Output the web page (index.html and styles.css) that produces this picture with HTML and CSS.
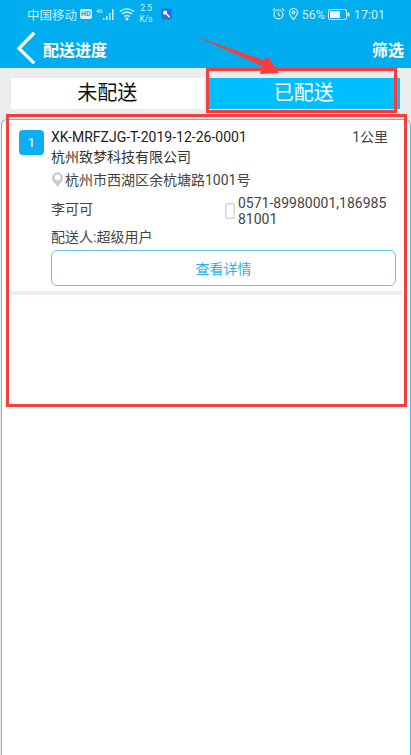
FILE: index.html
```html
<!DOCTYPE html>
<html lang="zh">
<head>
<meta charset="utf-8">
<title>配送进度</title>
<link rel="stylesheet" href="styles.css">
</head>
<body>
<div class="page">
  <header class="top">
    <div class="status">
      <div class="status-left">
        <span class="carrier">中国移动</span>
        <span class="hd">HD</span>
        <svg class="sig" width="18" height="14" viewBox="0 0 18 14"><text x="0" y="6" class="sig-t">46</text><path d="M7 13h1.500v-2H7zM10 13h1.500V9H10zM13 13h1.500V6H13zM16 13h1.500V2H16z" fill="#cfeffc"/></svg>
        <svg class="wifi" width="16" height="14" viewBox="0 0 16 14" fill="none" stroke="#e3f6fd" stroke-width="1.300"><path d="M1 4.500C5 1 11 1 15 4.500M3 7c3-2.400 7-2.400 10 0M5.200 9.500c1.700-1.200 3.900-1.200 5.600 0"/><circle cx="8" cy="12" r=".8" fill="#e3f6fd"/></svg>
        <span class="speed"><span>2.5</span><span>K/s</span></span>
        <svg class="key" width="11" height="12" viewBox="0 0 12 12"><rect width="12" height="12" rx="2.500" fill="#2a6fe0"/><circle cx="4.500" cy="4.500" r="2.300" fill="#fff"/><path d="M6 6l3.500 3.500" stroke="#fff" stroke-width="1.600"/></svg>
      </div>
      <div class="status-right">
        <svg width="13" height="14" viewBox="0 0 14 14" fill="none" stroke="#d6f2fc" stroke-width="1.300"><circle cx="7" cy="7.500" r="4.800"/><path d="M7 5v2.800l1.800 1M1 3.200L3.200 1M13 3.200L10.800 1"/></svg>
        <svg width="11" height="14" viewBox="0 0 12 14" fill="none" stroke="#d6f2fc" stroke-width="1.300"><path d="M6 13C3.500 9.800 1.600 7.800 1.600 5.400a4.400 4.400 0 0 1 8.800 0C10.400 7.800 8.500 9.800 6 13z"/><circle cx="6" cy="5.300" r="1.400"/></svg>
        <span class="pct">56%</span>
        <svg width="22" height="11" viewBox="0 0 22 11"><rect x=".5" y=".5" width="18" height="10" rx="1.500" fill="none" stroke="#d6f2fc"/><rect x="2" y="2" width="10" height="7" fill="#e8f8fe"/><rect x="19.500" y="3.500" width="2" height="4" fill="#d6f2fc"/></svg>
        <span class="clock">17:01</span>
      </div>
    </div>
    <div class="nav">
      <svg class="back" width="20" height="32" viewBox="0 0 20 32" fill="none" stroke="#f2fbff" stroke-width="3.400" stroke-linecap="square"><path d="M17 2L3 16.500 17 30"/></svg>
      <span class="title">配送进度</span>
      <span class="filter">筛选</span>
    </div>
  </header>
  <main class="body">
    <div class="tabs">
      <div class="tab">未配送</div>
      <div class="tab active">已配送</div>
    </div>
    <section class="panel">
      <article class="card">
        <div class="num">1</div>
        <div class="info">
          <div class="row-top"><span class="code">XK-MRFZJG-T-2019-12-26-0001</span><span class="dist">1公里</span></div>
          <div class="company">杭州致梦科技有限公司</div>
          <div class="addr">
            <svg width="13" height="15" viewBox="0 0 13 15"><path d="M6.500 15C3.500 11 1 8.700 1 5.800a5.500 5.500 0 0 1 11 0C12 8.700 9.500 11 6.500 15z" fill="#c9cccc"/><circle cx="6.500" cy="5.600" r="3" fill="#fff"/></svg>
            <span>杭州市西湖区余杭塘路1001号</span>
          </div>
          <div class="contact">
            <span class="name">李可可</span>
            <div class="phone">
              <svg width="10" height="16" viewBox="0 0 10 16"><rect x=".75" y=".75" width="8.500" height="14.500" rx="1.500" fill="#fff" stroke="#d5d7d7" stroke-width="1.500"/></svg>
              <span class="tel">0571-89980001,18698581001</span>
            </div>
          </div>
          <div class="courier">配送人:超级用户</div>
          <button class="detail" type="button">查看详情</button>
        </div>
      </article>
      <div class="divider"></div>
    </section>
  </main>
  <div class="mark box-tab"></div>
  <div class="mark box-card"></div>
  <svg class="arrow" width="90" height="42" viewBox="0 0 90 42"><path d="M1 1L69 25 74 22 85 38 66 39 68 31z" fill="#f73d3d"/></svg>
</div>
</body>
</html>
```
FILE: styles.css
```css
* { box-sizing: border-box; }
html, body { margin: 0; padding: 0; }
body {
  width: 411px;
  height: 755px;
  overflow: hidden;
  background: #fff;
  font-family: Roboto, "Noto Sans CJK SC", sans-serif;
}
.page { position: relative; width: 411px; height: 755px; display: flex; flex-direction: column; }
.top { height: 68px; background: #00aeef; color: #fff; flex: none; }
.status {
  height: 28px;
  padding: 0 26px 0 27px;
  display: flex;
  justify-content: space-between;
  align-items: center;
  color: #cdeefb;
  font-size: 12.500px;
}
.status-left, .status-right { display: flex; align-items: center; }
.status-right { gap: 3px; font-size: 12.500px; }
.hd { background: #d9f3fc; color: #00aeef; font-size: 7px; font-weight: 700; border-radius: 2px; padding: 1px; line-height: 8px; margin: 0 4px 0 3px; }
.sig-t { font-size: 6px; fill: #d6f2fc; font-family: Roboto, sans-serif; }
.wifi { margin-left: 5px; }
.speed { display: flex; flex-direction: column; align-items: center; font-size: 8.500px; line-height: 11px; margin: 0 8px 0 5px; color: #cdeefb; }
.clock { margin-left: 1px; }
.nav { height: 40px; display: flex; align-items: center; padding: 0 7px 0 16px; }
.back { flex: none; }
.title { font-size: 16px; font-weight: 700; margin-left: 7px; padding-top: 1px; }
.filter { margin-left: auto; font-size: 16px; font-weight: 700; padding-top: 1px; }
.body { flex: 1; background: #ebeded; padding-top: 10px; display: flex; flex-direction: column; min-height: 0; }
.tabs { display: flex; height: 31px; padding: 0 11px; gap: 4px; flex: none; }
.tab {
  flex: 1;
  background: #fff;
  color: #111;
  font-size: 20px;
  line-height: 31px;
  text-align: center;
}
.tab.active { background: #00bfff; color: #fff; }
.panel {
  flex: 1;
  margin: 10px 0 0 1px;
  width: 410px;
  background: #fff;
  border: 1px solid #4fc3f7;
  border-bottom: 0;
  border-radius: 6px 6px 0 0;
  min-height: 0;
}
.card { display: flex; padding: 8px 10px 0 17px; gap: 7px; }
.num {
  flex: none;
  width: 25px;
  height: 25px;
  margin-top: 2px;
  background: #0eaef2;
  color: #fff;
  border-radius: 4px;
  font-size: 13px;
  line-height: 25px;
  text-align: center;
}
.info { flex: 1; min-width: 0; color: #444; font-size: 14px; }
.row-top { display: flex; justify-content: space-between; height: 19px; line-height: 19px; padding-right: 12px; }
.code { color: #222; }
.company { height: 20px; line-height: 20px; color: #333; }
.addr { display: flex; align-items: center; height: 24px; }
.addr svg { flex: none; margin-right: 1px; }
.contact { display: flex; height: 37px; }
.name { width: 174px; line-height: 22px; margin-top: 7px; }
.phone { display: flex; align-items: center; gap: 3px; align-self: flex-start; margin-top: 4px; }
.tel { width: 150px; line-height: 16px; word-break: break-all; }
.courier { height: 19px; line-height: 19px; }
.detail {
  display: block;
  width: 345px;
  height: 36px;
  margin-top: 3px;
  background: #fff;
  border: 1px solid #62c6ee;
  border-radius: 6px;
  color: #25b2f0;
  font: 14px Roboto, "Noto Sans CJK SC", sans-serif;
}
.divider { height: 4px; margin: 5px 8px 0 9px; background: #ebeeee; }
.mark { position: absolute; border: 3px solid #f73d3d; }
.box-tab { left: 206px; top: 68px; width: 191px; height: 45px; }
.box-card { left: 6px; top: 114px; width: 401px; height: 293px; }
.arrow { position: absolute; left: 194px; top: 35px; }
```
